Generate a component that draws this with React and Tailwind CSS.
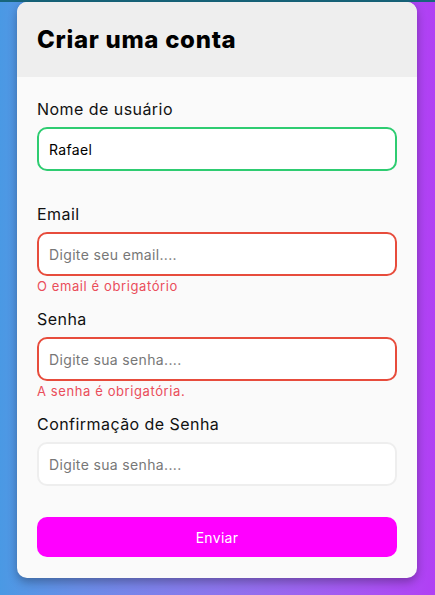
import { useState } from 'react';

const fields = [
  { id: 'username', label: 'Nome de usuário', type: 'text', placeholder: 'Digite seu nome....', value: 'Rafael', status: 'ok' },
  { id: 'email', label: 'Email', type: 'email', placeholder: 'Digite seu email....', value: '', status: 'error', error: 'O email é obrigatório' },
  { id: 'password', label: 'Senha', type: 'password', placeholder: 'Digite sua senha....', value: '', status: 'error', error: 'A senha é obrigatória.' },
  { id: 'confirm', label: 'Confirmação de Senha', type: 'password', placeholder: 'Digite sua senha....', value: '', status: 'idle' },
];

export default function App() {
  const [values, setValues] = useState(
    Object.fromEntries(fields.map((f) => [f.id, f.value]))
  );

  const borderFor = (status) =>
    status === 'ok'
      ? 'border-[#2ecc71]'
      : status === 'error'
      ? 'border-[#e74c3c]'
      : 'border-[#eeeeee]';

  return (
    <div className="min-h-screen w-full bg-linear-to-r from-[#4a99e4] to-[#b13ff4] font-['Inter',sans-serif]">
      <div className="h-[2px] bg-[#17657c]" />
      <div className="flex pl-[17px] pb-4">
        {/* CARD */}
        <div className="w-[400px] bg-[#fafafa] rounded-[10px] shadow-[0_4px_10px_rgba(0,0,0,0.3)] overflow-hidden">
          <div className="bg-[#eeeeee] h-[75px] px-5 flex items-center">
            <h1 className="text-[24px] font-extrabold text-black tracking-[0.7px]">Criar uma conta</h1>
          </div>

          <form className="px-5 pt-5 pb-[21px]" onSubmit={(e) => e.preventDefault()}>
            {fields.map((f) => (
              <div key={f.id} className="mb-[11px]">
                <label htmlFor={f.id} className="block text-[16px] leading-6 text-[#111] tracking-[0.45px] mb-[6px]">
                  {f.label}
                </label>
                <input
                  id={f.id}
                  type={f.type}
                  placeholder={f.placeholder}
                  value={values[f.id]}
                  onChange={(e) => setValues({ ...values, [f.id]: e.target.value })}
                  className={`block w-full h-[44px] bg-white border-2 ${borderFor(f.status)} rounded-[10px] px-[10px] text-[14px] tracking-[0.35px] text-black placeholder:text-[#777] outline-none`}
                />
                <div className="h-5 text-[13px] leading-5 tracking-[0.6px] text-[#ea4d5a]">{f.error}</div>
              </div>
            ))}

            <button
              type="submit"
              className="w-full h-10 bg-[#ff00ff] text-white text-[14px] tracking-[0.3px] rounded-[10px]"
            >
              Enviar
            </button>
          </form>
        </div>
      </div>
    </div>
  );
}
